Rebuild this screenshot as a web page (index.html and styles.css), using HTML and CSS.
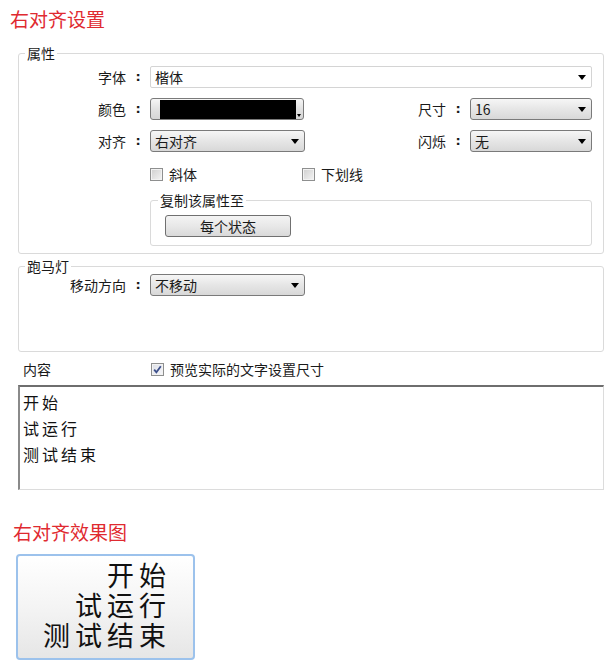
FILE: index.html
```html
<!DOCTYPE html>
<html lang="zh-CN">
<head>
<meta charset="utf-8">
<title>右对齐设置</title>
<link rel="stylesheet" href="styles.css">
</head>
<body>
<h1 class="title">右对齐设置</h1>

<fieldset class="group">
  <legend>属性</legend>
  <div class="row first">
    <span class="label">字体<span class="colon">:</span></span>
    <div class="select flat wide"><span>楷体</span><span class="arrow"></span></div>
  </div>
  <div class="row">
    <span class="label">颜色<span class="colon">:</span></span>
    <div class="picker"><span class="swatch"></span><span class="mini-arrow"></span></div>
    <span class="label grow">尺寸<span class="colon">:</span></span>
    <div class="select small"><span>16</span><span class="arrow"></span></div>
  </div>
  <div class="row">
    <span class="label">对齐<span class="colon">:</span></span>
    <div class="select mid"><span>右对齐</span><span class="arrow"></span></div>
    <span class="label grow">闪烁<span class="colon">:</span></span>
    <div class="select small"><span>无</span><span class="arrow"></span></div>
  </div>
  <div class="checks">
    <label class="check-item italic-item"><span class="check"></span>斜体</label>
    <label class="check-item"><span class="check"></span>下划线</label>
  </div>
  <fieldset class="subgroup">
    <legend>复制该属性至</legend>
    <button class="btn" type="button">每个状态</button>
  </fieldset>
</fieldset>

<fieldset class="group marquee">
  <legend>跑马灯</legend>
  <div class="row">
    <span class="label">移动方向<span class="colon">:</span></span>
    <div class="select mid"><span>不移动</span><span class="arrow"></span></div>
  </div>
</fieldset>

<div class="content-row">
  <span class="content-label">内容</span>
  <label class="check-item"><span class="check checked"><svg viewBox="0 0 11 11" width="11" height="11"><path d="M2.2 5.6 L4.4 8.3 L8.8 2.3" fill="none" stroke="#3c4f8a" stroke-width="1.8"/></svg></span>预览实际的文字设置尺寸</label>
</div>
<textarea class="textbox" readonly>开始
试运行
测试结束</textarea>

<h2 class="title sub">右对齐效果图</h2>
<div class="preview">
  <div>开始</div>
  <div>试运行</div>
  <div>测试结束</div>
</div>
</body>
</html>
```

FILE: styles.css
```css
body {
  margin: 0;
  width: 616px;
  background: #fff;
  color: #1a1a1a;
  font-family: "Noto Sans CJK SC", "Noto Sans", sans-serif;
  font-size: 14px;
  line-height: 16px;
}

.title {
  margin: 0;
  padding: 7px 0 0 10px;
  font-size: 19px;
  line-height: 24px;
  font-weight: normal;
  color: #df2a30;
}

.group {
  margin: 14px 12px 0 18px;
  padding: 0 11px 7px 0;
  border: 1px solid #dadada;
  border-radius: 3px;
  min-width: 0;
}

legend {
  margin-left: 6px;
  padding: 0 2px;
  font-size: 14px;
  line-height: 16px;
}

.row {
  display: flex;
  align-items: center;
  gap: 4px;
  height: 22px;
  margin-top: 10px;
}

.row.first {
  margin-top: 5px;
}

.label {
  width: 127px;
  flex: none;
  display: flex;
  justify-content: flex-end;
  white-space: nowrap;
}

.label.grow {
  width: auto;
  flex: 1;
}

.colon {
  width: 16px;
  margin-left: 4px;
  text-align: center;
  font-family: "DejaVu Sans", sans-serif;
  font-weight: bold;
  font-size: 13px;
}

.select {
  height: 22px;
  box-sizing: border-box;
  display: flex;
  align-items: center;
  justify-content: space-between;
  padding: 0 5px 0 4px;
  border: 1px solid #7a7a7a;
  border-radius: 3px;
  background: linear-gradient(#f6f6f6, #e6e6e6 50%, #d8d8d8);
}

.select.flat {
  border-color: #d4d4d4;
  border-radius: 2px;
  background: #fff;
}

.select.wide {
  flex: 1;
}

.select.mid {
  width: 155px;
}

.select.small {
  width: 122px;
}

.arrow {
  width: 0;
  height: 0;
  border-left: 4.5px solid transparent;
  border-right: 4.5px solid transparent;
  border-top: 5px solid #000;
}

.picker {
  position: relative;
  width: 154px;
  height: 22px;
  box-sizing: border-box;
  padding: 1px 7px 0 9px;
  border: 1px solid #7a7a7a;
  border-radius: 3px;
  background: linear-gradient(#f6f6f6, #e2e2e2 50%, #d6d6d6);
  display: flex;
}

.swatch {
  flex: 1;
  height: 19px;
  background: #000;
}

.mini-arrow {
  position: absolute;
  right: 2px;
  bottom: 2px;
  width: 0;
  height: 0;
  border-left: 2.5px solid transparent;
  border-right: 2.5px solid transparent;
  border-top: 3px solid #000;
}

.checks {
  display: flex;
  align-items: center;
  height: 16px;
  margin: 14px 0 0 131px;
}

.check-item {
  display: flex;
  align-items: center;
  gap: 6px;
  white-space: nowrap;
}

.italic-item {
  width: 152px;
}

.check {
  width: 13px;
  height: 13px;
  box-sizing: border-box;
  border: 1px solid #8e8f8f;
  background: linear-gradient(135deg, #cfcfcf, #f4f4f4);
  box-shadow: inset 0 0 0 1px #f2f2f2;
  display: flex;
  align-items: center;
  justify-content: center;
}

.check.checked {
  background: linear-gradient(135deg, #dcdfe6, #f7f7fa);
}

.subgroup {
  margin: 10px 0 0 131px;
  padding: 7px 0 8px 14px;
  border: 1px solid #dadada;
  border-radius: 3px;
  min-width: 0;
}

.subgroup legend {
  margin-left: -7px;
}

.btn {
  display: block;
  width: 126px;
  height: 22px;
  margin: 0;
  padding: 0;
  border: 1px solid #707070;
  border-radius: 3px;
  background: linear-gradient(#f4f4f4, #e8e8e8 50%, #d9d9d9);
  font-family: inherit;
  font-size: 14px;
  line-height: 16px;
  color: #1a1a1a;
}

.marquee {
  margin-top: 4px;
  padding-bottom: 55px;
}

.marquee .row {
  margin-top: 0;
}

.content-row {
  display: flex;
  align-items: center;
  height: 16px;
  margin-top: 9px;
  padding-left: 23px;
}

.content-label {
  width: 128px;
}

.textbox {
  display: block;
  width: 586px;
  height: 105px;
  box-sizing: border-box;
  margin: 8px 0 0 18px;
  padding: 2px 3px;
  border-style: solid;
  border-width: 2px 1px 1px 2px;
  border-color: #6e6e6e #dcdcdc #dcdcdc #8a8a8a;
  resize: none;
  overflow: hidden;
  font-family: "Noto Sans CJK SC", sans-serif;
  font-size: 16px;
  letter-spacing: 3px;
  line-height: 26px;
  color: #111;
  outline: none;
}

.title.sub {
  margin-top: 30px;
  padding-top: 0;
  padding-left: 13px;
}

.preview {
  width: 179px;
  height: 106px;
  box-sizing: border-box;
  margin: 10px 0 0 16px;
  padding: 4px 22px 0 0;
  border: 2px solid #9cc2ec;
  border-radius: 4px;
  background: linear-gradient(#ffffff, #f4f4f4 50%, #e6e6e6);
  text-align: right;
  font-size: 27px;
  line-height: 30px;
  letter-spacing: 5px;
  color: #111;
}
```
